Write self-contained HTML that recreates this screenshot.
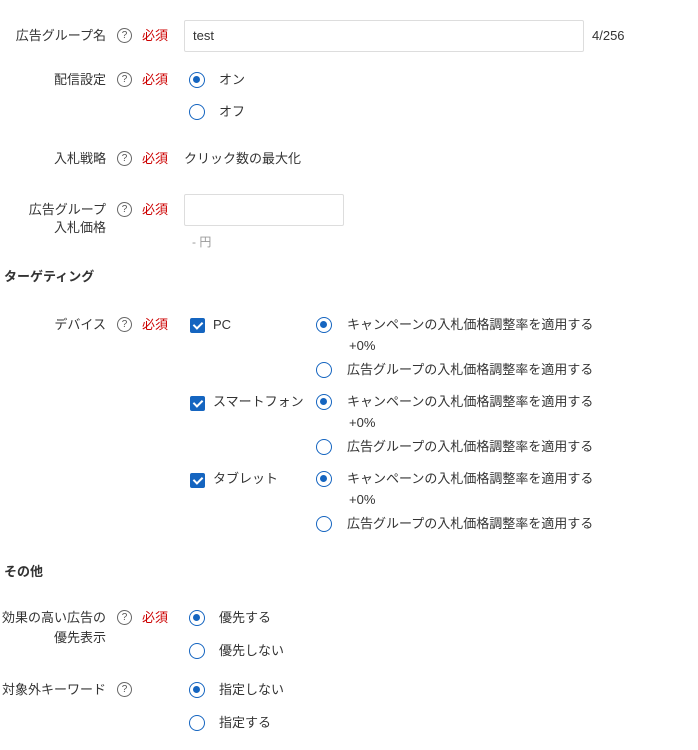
<!DOCTYPE html>
<html><head><meta charset="utf-8"><style>
body{margin:0;width:698px;height:750px;background:#fff;font-family:"Liberation Sans","Noto Sans CJK JP",sans-serif;font-size:13px;color:#333;position:relative;overflow:hidden}
.a{position:absolute;white-space:nowrap;line-height:18px}
.l{position:absolute;right:592px;text-align:right;line-height:18px;white-space:nowrap}
.q{position:absolute;left:117px;width:13px;height:13px;border:1px solid #666;border-radius:50%;font-size:10px;line-height:13px;text-align:center;color:#555}
.r{position:absolute;left:142px;color:#c00;line-height:18px}
.rad{position:absolute;width:16px;height:16px;border:1.5px solid #1565c0;border-radius:50%;box-sizing:border-box}
.rad.on::after{content:"";position:absolute;left:3px;top:3px;width:7px;height:7px;border-radius:50%;background:#1565c0}
.cb{position:absolute;left:190px;width:15px;height:15px;background:#1565c0;border-radius:2px}
.cb::after{content:"";position:absolute;left:5px;top:2px;width:4px;height:7px;border:solid #fff;border-width:0 2px 2px 0;transform:rotate(45deg)}
.box{position:absolute;border:1px solid #ddd;border-radius:2px;box-sizing:border-box}
.h{position:absolute;left:4px;font-weight:bold;line-height:18px}
</style></head><body>
<div class="l" style="top:27px">広告グループ名</div><div class="q" style="top:28px">?</div><div class="r" style="top:27px">必須</div>
<div class="box" style="left:184px;top:20px;width:400px;height:32px"></div>
<div class="a" style="left:193px;top:27px">test</div>
<div class="a" style="left:592px;top:27px">4/256</div>

<div class="l" style="top:71px">配信設定</div><div class="q" style="top:72px">?</div><div class="r" style="top:71px">必須</div>
<div class="rad on" style="left:189px;top:72px"></div><div class="a" style="left:219px;top:71px">オン</div>
<div class="rad" style="left:189px;top:104px"></div><div class="a" style="left:219px;top:103px">オフ</div>

<div class="l" style="top:150px">入札戦略</div><div class="q" style="top:151px">?</div><div class="r" style="top:150px">必須</div>
<div class="a" style="left:184px;top:150px">クリック数の最大化</div>

<div class="l" style="top:201px">広告グループ</div><div class="l" style="top:219px">入札価格</div><div class="q" style="top:202px">?</div><div class="r" style="top:201px">必須</div>
<div class="box" style="left:184px;top:194px;width:160px;height:32px"></div>
<div class="a" style="left:192px;top:233px;color:#999;font-size:12px">- 円</div>

<div class="h" style="top:268px">ターゲティング</div>

<div class="l" style="top:316px">デバイス</div><div class="q" style="top:317px">?</div><div class="r" style="top:316px">必須</div>

<div class="cb" style="top:318px"></div><div class="a" style="left:213px;top:316px">PC</div>
<div class="rad on" style="left:316px;top:317px"></div><div class="a" style="left:347px;top:316px">キャンペーンの入札価格調整率を適用する</div>
<div class="a" style="left:349px;top:337px">+0%</div>
<div class="rad" style="left:316px;top:362px"></div><div class="a" style="left:347px;top:361px">広告グループの入札価格調整率を適用する</div>

<div class="cb" style="top:396px"></div><div class="a" style="left:213px;top:393px">スマートフォン</div>
<div class="rad on" style="left:316px;top:394px"></div><div class="a" style="left:347px;top:393px">キャンペーンの入札価格調整率を適用する</div>
<div class="a" style="left:349px;top:414px">+0%</div>
<div class="rad" style="left:316px;top:439px"></div><div class="a" style="left:347px;top:438px">広告グループの入札価格調整率を適用する</div>

<div class="cb" style="top:473px"></div><div class="a" style="left:213px;top:470px">タブレット</div>
<div class="rad on" style="left:316px;top:471px"></div><div class="a" style="left:347px;top:470px">キャンペーンの入札価格調整率を適用する</div>
<div class="a" style="left:349px;top:491px">+0%</div>
<div class="rad" style="left:316px;top:516px"></div><div class="a" style="left:347px;top:515px">広告グループの入札価格調整率を適用する</div>

<div class="h" style="top:563px">その他</div>

<div class="l" style="top:609px">効果の高い広告の</div><div class="l" style="top:629px">優先表示</div><div class="q" style="top:610px">?</div><div class="r" style="top:609px">必須</div>
<div class="rad on" style="left:189px;top:610px"></div><div class="a" style="left:219px;top:609px">優先する</div>
<div class="rad" style="left:189px;top:643px"></div><div class="a" style="left:219px;top:642px">優先しない</div>

<div class="l" style="top:681px">対象外キーワード</div><div class="q" style="top:682px">?</div>
<div class="rad on" style="left:189px;top:682px"></div><div class="a" style="left:219px;top:681px">指定しない</div>
<div class="rad" style="left:189px;top:715px"></div><div class="a" style="left:219px;top:714px">指定する</div>
</body></html>
